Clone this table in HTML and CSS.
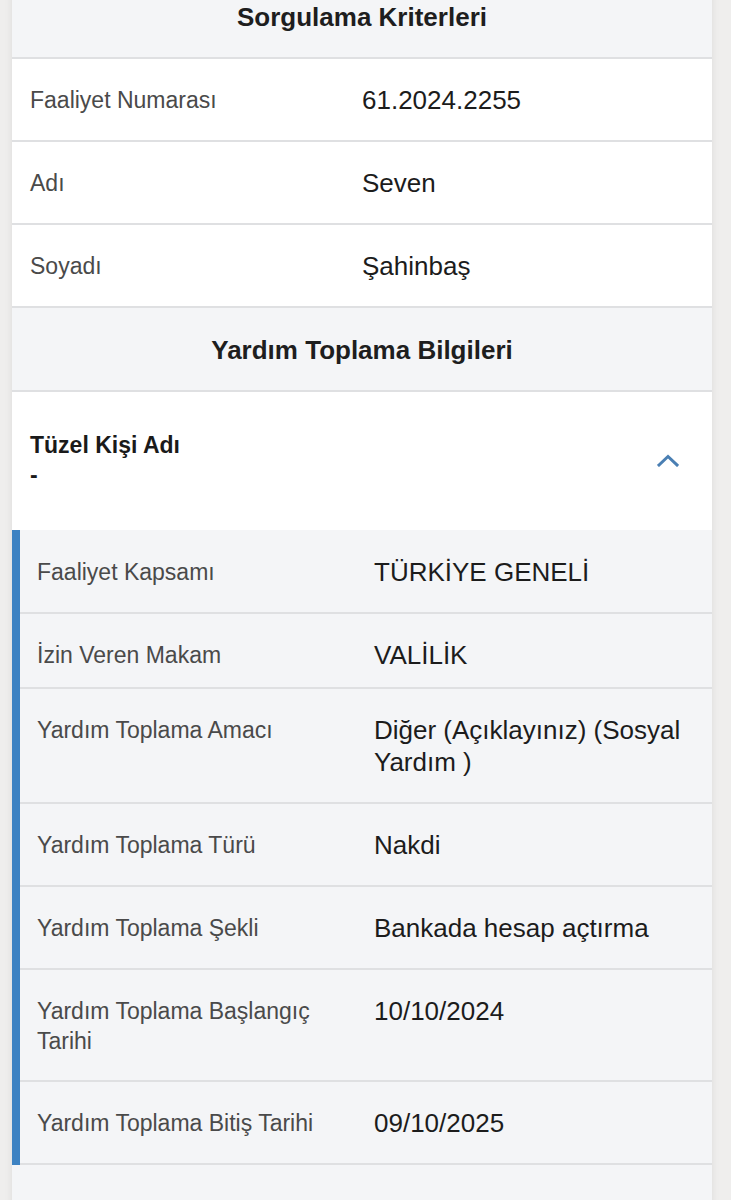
FILE: index.html
```html
<!DOCTYPE html>
<html lang="tr">
<head>
<meta charset="utf-8">
<title>Sorgulama</title>
<link rel="stylesheet" href="styles.css">
</head>
<body>
<main class="card">
  <header class="section-head">Sorgulama Kriterleri</header>
  <div class="crit-row"><span class="label">Faaliyet Numarası</span><span class="value">61.2024.2255</span></div>
  <div class="crit-row"><span class="label">Adı</span><span class="value">Seven</span></div>
  <div class="crit-row"><span class="label">Soyadı</span><span class="value">Şahinbaş</span></div>

  <header class="section-head">Yardım Toplama Bilgileri</header>

  <div class="entity">
    <div class="entity-text">
      <div class="entity-title">Tüzel Kişi Adı</div>
      <div class="entity-sub">-</div>
    </div>
    <svg class="chevron" width="22" height="14" viewBox="0 0 22 14" aria-hidden="true">
      <polyline points="2,12 11,3.5 20,12" fill="none" stroke="#4a7fb3" stroke-width="3" stroke-linecap="square"/>
    </svg>
  </div>

  <div class="details">
    <div class="det-row"><span class="label">Faaliyet Kapsamı</span><span class="value">TÜRKİYE GENELİ</span></div>
    <div class="det-row det-row--short"><span class="label">İzin Veren Makam</span><span class="value">VALİLİK</span></div>
    <div class="det-row"><span class="label">Yardım Toplama Amacı</span><span class="value">Diğer (Açıklayınız) (Sosyal Yardım )</span></div>
    <div class="det-row"><span class="label">Yardım Toplama Türü</span><span class="value">Nakdi</span></div>
    <div class="det-row"><span class="label">Yardım Toplama Şekli</span><span class="value">Bankada hesap açtırma</span></div>
    <div class="det-row"><span class="label">Yardım Toplama Başlangıç Tarihi</span><span class="value">10/10/2024</span></div>
    <div class="det-row"><span class="label">Yardım Toplama Bitiş Tarihi</span><span class="value">09/10/2025</span></div>
  </div>
  <div class="card-foot"></div>
</main>
</body>
</html>
```

FILE: styles.css
```css
* { box-sizing: border-box; }

html, body {
  margin: 0;
  padding: 0;
  background: #efeeed;
  font-family: "Liberation Sans", Arial, Helvetica, sans-serif;
  overflow: hidden;
}

.card {
  width: 700px;
  margin: -25px 0 0 12px;
  background: #f4f5f7;
  box-shadow: 0 0 8px rgba(0, 0, 0, 0.08);
}

.section-head {
  height: 84px;
  display: flex;
  align-items: center;
  justify-content: center;
  background: #f4f5f7;
  border-bottom: 2px solid #dfe0e2;
  font-size: 26px;
  font-weight: bold;
  color: #1e1e1e;
  padding-top: 3px;
}

.label {
  font-size: 23px;
  line-height: 30px;
  color: #4a4a4a;
}

.value {
  font-size: 26px;
  line-height: 32px;
  color: #1c1c1c;
}

.crit-row {
  display: grid;
  grid-template-columns: 332px 1fr;
  align-items: center;
  height: 83px;
  padding: 0 18px;
  background: #ffffff;
  border-bottom: 2px solid #dfe0e2;
}

.crit-row:nth-of-type(4) {
  border-bottom-width: 3px;
}

.entity {
  display: flex;
  align-items: center;
  justify-content: space-between;
  height: 138px;
  padding: 0 33px 2px 18px;
  background: #ffffff;
}

.entity-title {
  font-size: 23px;
  line-height: 30px;
  font-weight: bold;
  color: #1a1a1a;
}

.entity-sub {
  font-size: 23px;
  line-height: 30px;
  font-weight: bold;
  color: #1a1a1a;
}

.chevron {
  display: block;
}

.details {
  border-left: 8px solid #3d82c2;
  background: #f4f5f7;
}

.det-row {
  display: grid;
  grid-template-columns: 320px 1fr;
  column-gap: 17px;
  align-items: start;
  padding: 25px 20px 24px 17px;
  border-bottom: 2px solid #dfe0e2;
}

.det-row .label {
  padding-top: 1px;
}

.det-row:first-child {
  padding-top: 26px;
  min-height: 83px;
}

.det-row--short {
  padding-bottom: 16px;
}

.card-foot {
  height: 80px;
  background: #f4f5f7;
}
```
